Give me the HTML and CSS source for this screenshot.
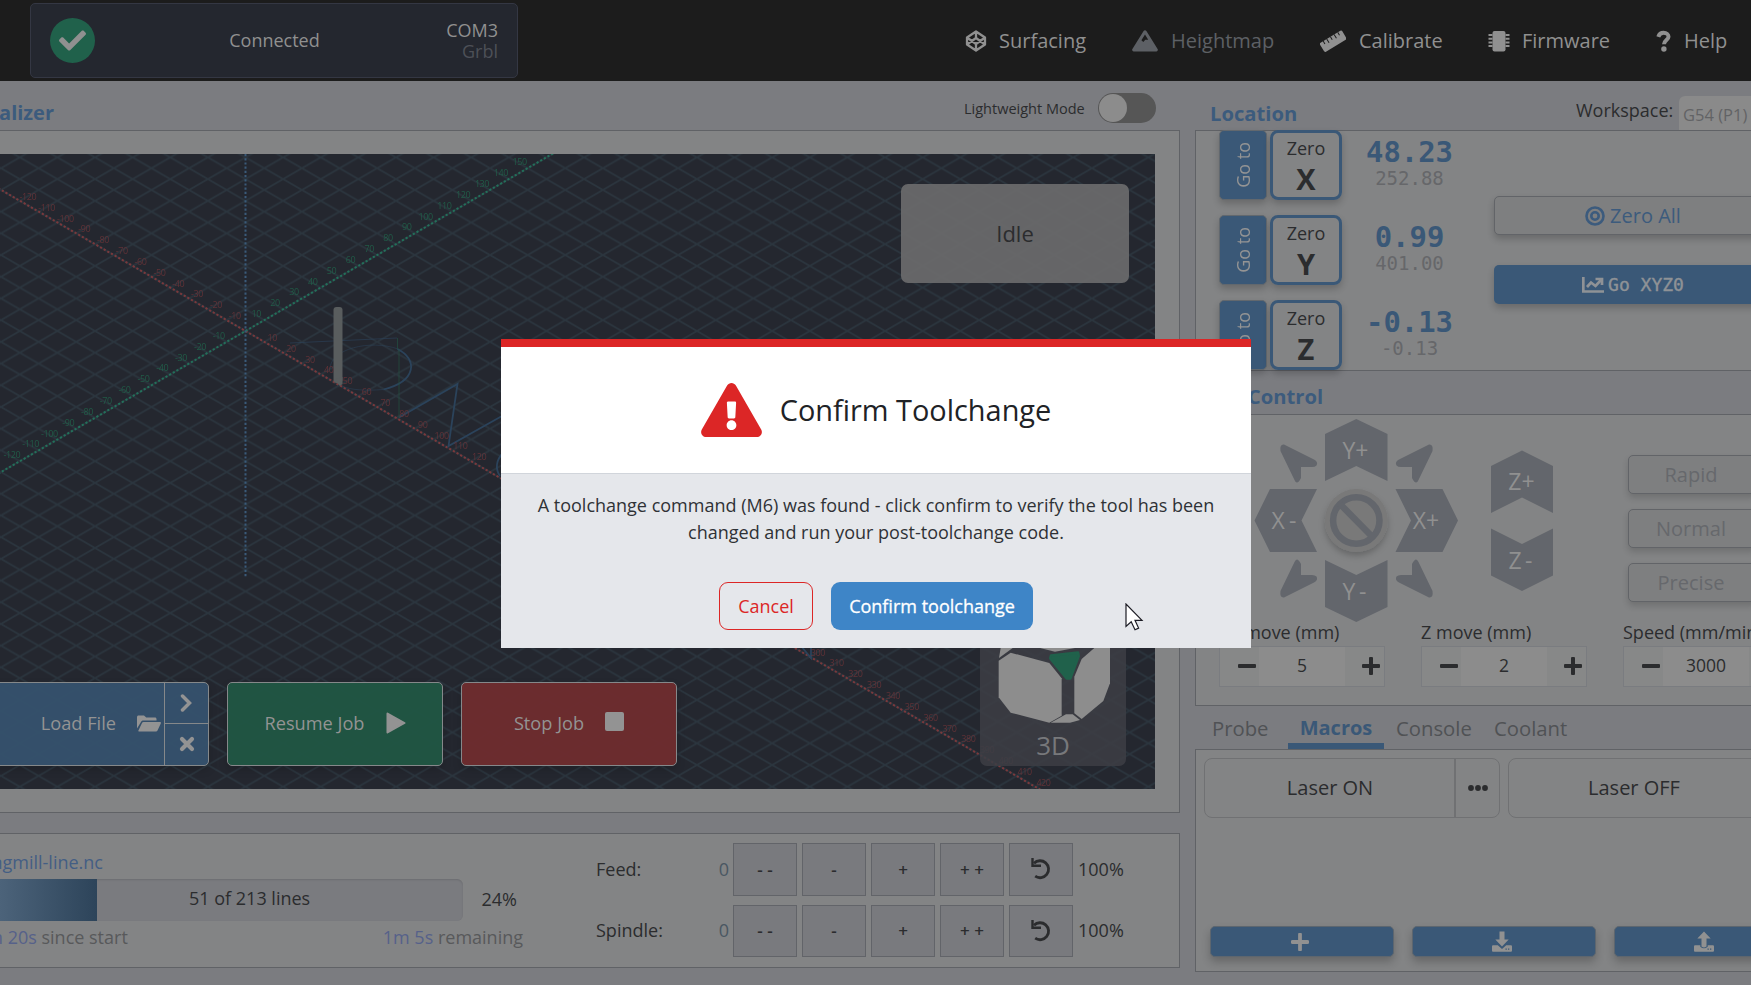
FILE: index.html
```html
<!DOCTYPE html>
<html lang="en">
<head>
<meta charset="utf-8">
<title>gSender</title>
<link rel="stylesheet" href="styles.css">
</head>
<body>
<div class="app">
  <header class="topbar">
    <div class="connection">
      <span class="conn-badge"><svg viewBox="0 0 512 512" width="27" height="27"><path fill="currentColor" d="M173.900 439.400L7.500 273c-10-10-10-26.200 0-36.200l36.200-36.200c10-10 26.200-10 36.200 0L192 312.700 432.100 72.600c10-10 26.200-10 36.200 0l36.200 36.200c10 10 10 26.200 0 36.200L210.100 439.400c-10 10-26.200 10-36.200 0z"/></svg></span>
      <span class="conn-state">Connected</span>
      <span class="conn-port"><span>COM3</span><span class="conn-fw">Grbl</span></span>
    </div>
    <nav class="nav">
      <a class="nav-item surfacing"><svg viewBox="0 0 22 22" width="22" height="22" fill="none" stroke="currentColor" stroke-width="2.300" stroke-linejoin="round"><path d="M11 1.500L20 7.500v7L11 20.500 2 14.500v-7zM11 1.500V8M11 14v6.500M2 7.500L11 14l9-6.500M2 14.500L11 8l9 6.500"/></svg><span>Surfacing</span></a>
      <a class="nav-item heightmap"><svg viewBox="0 0 26 22" width="26" height="22"><path fill="currentColor" fill-rule="evenodd" d="M11.600.9a1.700 1.700 0 0 1 2.800 0l11.200 18a1.700 1.700 0 0 1-1.400 2.600H1.800A1.700 1.700 0 0 1 .4 18.900zM13 4.500l-3.600 5.700 1.900 1.900 2-2.300h2.900z"/></svg><span>Heightmap</span></a>
      <a class="nav-item calibrate"><svg viewBox="0 0 26 22" width="26" height="22"><g transform="rotate(-31 13 11)"><rect x="0" y="6" width="26" height="10.500" rx="1.500" fill="currentColor"/><path d="M4.500 6v3.500M8.700 6v4.500M13 6v3.500M17.300 6v4.500M21.500 6v3.500" stroke="#1c1c1c" stroke-width="1"/></g></svg><span>Calibrate</span></a>
      <a class="nav-item firmware"><svg viewBox="0 0 22 22" width="22" height="22"><rect x="4.500" y="1" width="13" height="20.500" rx="2" fill="currentColor"/><path d="M.5 5h4M.5 8.700h4M.5 12.400h4M.5 16.100h4M17.500 5h4M17.500 8.700h4M17.500 12.400h4M17.500 16.100h4" stroke="currentColor" stroke-width="2"/></svg><span>Firmware</span></a>
      <a class="nav-item help"><svg viewBox="0 0 16 22" width="16" height="22" fill="none" stroke="currentColor"><path stroke-width="4" d="M2.300 6.800C3.200 3.900 5 2.800 7.600 2.800c3 0 4.900 1.700 4.900 3.900 0 3.300-4.500 3.400-4.500 7.600"/><circle cx="7.900" cy="19" r="2.700" fill="currentColor" stroke="none"/></svg><span>Help</span></a>
    </nav>
  </header>

  <main class="main">
    <section class="left">
      <div class="vis-head">
        <h2 class="title vis-title">Visualizer</h2>
        <span class="light-label">Lightweight Mode</span>
        <span class="switch"><i></i></span>
      </div>
      <div class="panel vis-panel">
        <div class="stage">
          <svg class="scene" id="scene" viewBox="0 154 1155 635" width="1155" height="635">
            <defs>
              <pattern id="grid" x="245.500" y="331" width="37.620" height="21.700" patternUnits="userSpaceOnUse">
                <path d="M-1 -.577L38.620 22.277M-1 22.277L38.620 -.577" stroke="#2b353e" stroke-width="1.700"/>
              </pattern>
            </defs>
            <rect y="154" width="1155" height="635" fill="#24272f"/>
            <rect y="154" width="1155" height="635" fill="url(#grid)"/>
            <path class="axis x" d="M-60 154.700L1046 793"/>
            <path class="axis y" d="M-20 484.200L560 149.500"/>
            <path class="axis z" d="M245.500 154V578"/>
            <g fill="none" stroke="#2b435b" stroke-width="1.800">
              <path d="M290 343L397 338" opacity=".6" stroke-width="1"/>
              <path d="M330 369c0-20 40-30 68-20M342 386c8 4 24 5 41 3.500" opacity=".5" stroke-width="1"/>
              <path d="M397.500 349c20 10 20 32-14 40.500"/>
              <path d="M399 417.500L457.500 384 448.500 446 502 416"/>
              <path d="M503 453c-7 7-8 16-3 23"/>
              <path d="M397.500 338v11M399 349v69" stroke="#225040" stroke-width="1" opacity=".7"/>
              <path d="M796 640l15 18V640"/>
            </g>
            <rect x="333.500" y="307" width="9" height="76" rx="3" fill="#595d5e"/>
            <path d="M334 380l6 6 2.500-2v-7z" fill="#595d5e"/>
            <g id="labels"></g>
          </svg>
          <div class="status">Idle</div>
          <div class="viewcube">
            <svg viewBox="0 0 438 354" width="146" height="118">
              <g fill="#8d8d8d">
                <path d="M56 38L92 14 208 45 245 91V203L208 224 92 194 56 148z"/>
                <path d="M283 86L305 33 343 0H390V106L370 159 305 213 283 196z"/>
                <path d="M212 224L258 199H278L300 216 270 224z"/>
                <path d="M180 0L225 11 285 0zM57 30L62 0H98z"/>
              </g>
              <path fill="#20614b" stroke="#20614b" stroke-width="8" stroke-linejoin="round" d="M213 23L294 14 296 24 271 91H260L211 31z"/>
            </svg>
            <span>3D</span>
          </div>
          <div class="jobs">
            <div class="load">
              <div class="load-main"><span>Load File</span><svg viewBox="0 0 24 16" width="24" height="17"><path fill="currentColor" d="M0 1.500C0 .7.700 0 1.500 0H7l2.200 2H18c.8 0 1.500.7 1.500 1.500V5H6.500C5.400 5 4.500 5.500 4 6.400L0 13zM1.200 15.500L5 7.500c.3-.6.8-1 1.500-1H23c.7 0 1.200.7.800 1.400l-3.300 7c-.3.600-.8 1-1.500 1H2c-.5 0-.9-.2-.8-.4z"/></svg></div>
              <div class="load-side">
                <span><svg viewBox="0 0 13 18" width="13" height="18"><path d="M2.500 2L9.500 9l-7 7" fill="none" stroke="currentColor" stroke-width="3.500" stroke-linecap="round"/></svg></span>
                <span><svg viewBox="0 0 16 16" width="16" height="16"><path d="M3 3l10 10M13 3L3 13" fill="none" stroke="currentColor" stroke-width="4.200" stroke-linecap="round"/></svg></span>
              </div>
            </div>
            <div class="job resume"><span>Resume Job</span><svg viewBox="0 0 20 22" width="20" height="22"><path d="M1.500 1.500L18.500 11l-17 9.500z" fill="currentColor" stroke="currentColor" stroke-width="2" stroke-linejoin="round"/></svg></div>
            <div class="job stop"><span>Stop Job</span><svg viewBox="0 0 19 24" width="19" height="24"><rect y="1" width="19" height="19" rx="2" fill="currentColor"/></svg></div>
          </div>
        </div>
      </div>
      <div class="panel status-panel">
        <div class="progress-col">
          <div class="file">longmill-line.nc</div>
          <div class="bar-row"><div class="bar"><div class="fill"></div><span>51 of 213 lines</span></div><span class="pct">24%</span></div>
          <div class="times"><span><b>0m 20s</b> since start</span><span><b>1m 5s</b> remaining</span></div>
        </div>
        <div class="overrides">
          <div class="ov-row feed"><span class="ov-name">Feed:</span><span class="ov-val">0</span><button>- -</button><button>-</button><button>+</button><button>+ +</button><button><svg viewBox="0 0 22 22" width="22" height="22"><path d="M4 5.300A8.500 8.500 0 1 1 5.200 18.200" fill="none" stroke="currentColor" stroke-width="2.800"/><path d="M2.500 0v7.800H11" fill="none" stroke="currentColor" stroke-width="2.400"/></svg></button><span class="ov-pct">100%</span></div>
          <div class="ov-row spindle"><span class="ov-name">Spindle:</span><span class="ov-val">0</span><button>- -</button><button>-</button><button>+</button><button>+ +</button><button><svg viewBox="0 0 22 22" width="22" height="22"><path d="M4 5.300A8.500 8.500 0 1 1 5.200 18.200" fill="none" stroke="currentColor" stroke-width="2.800"/><path d="M2.500 0v7.800H11" fill="none" stroke="currentColor" stroke-width="2.400"/></svg></button><span class="ov-pct">100%</span></div>
        </div>
      </div>
    </section>

    <section class="right">
      <div class="loc-head"><h2 class="title">Location</h2><span class="ws-label">Workspace:</span><span class="ws-select">G54 (P1)</span></div>
      <div class="panel loc-panel">
        <div class="axes">
          <div class="axis-row"><div class="goto"><span>Go to</span></div><div class="zero"><span>Zero</span><b>X</b></div><div class="pos"><b>48.23</b><span>252.88</span></div></div>
          <div class="axis-row"><div class="goto"><span>Go to</span></div><div class="zero"><span>Zero</span><b>Y</b></div><div class="pos"><b>0.99</b><span>401.00</span></div></div>
          <div class="axis-row"><div class="goto"><span>Go to</span></div><div class="zero"><span>Zero</span><b>Z</b></div><div class="pos"><b>-0.13</b><span>-0.13</span></div></div>
        </div>
        <div class="loc-actions">
          <div class="zero-all"><svg viewBox="0 0 20 20" width="20" height="20" fill="none" stroke="currentColor" stroke-width="2.600"><circle cx="10" cy="10" r="8.500"/><circle cx="10" cy="10" r="3.700"/></svg>Zero All</div>
          <div class="go-xyz"><svg viewBox="0 0 22 16" width="22" height="16" fill="none" stroke="currentColor" stroke-width="2.700"><path d="M1.300 0v14.500H22"/><path d="M5 10l4-4.500 4.500 3.500 5.500-6"/><path d="M13.500 2H20v6"/></svg>Go XYZ0</div>
        </div>
      </div>

      <div class="jog-head"><h2 class="title">Jog Control</h2></div>
      <div class="panel jog-panel">
        <div class="jog-top">
          <svg class="jogpad" viewBox="1250 415 310 213" width="310" height="213">
            <defs>
              <path id="corner" d="M1284 444.500L1314 459.500Q1318.500 462 1316.500 465.500Q1315 467 1312 467H1301V478Q1297 486 1294.500 480L1280.500 451Q1279.500 444 1284 444.500z"/>
              <filter id="soft" x="-30%" y="-30%" width="160%" height="170%"><feDropShadow dx="0" dy="4" stdDeviation="3" flood-color="#000" flood-opacity=".22"/></filter>
            </defs>
            <g fill="#63666c">
              <path d="M1325 434L1356.300 419 1387.500 434V481L1356.300 466 1325 481z"/>
              <path d="M1325 560L1356.300 575 1387.500 560V607L1356.300 622 1325 607z"/>
              <path d="M1270 489H1317L1301.500 520.500 1317 552H1270L1254.500 520.500z"/>
              <path d="M1395.500 489H1442.500L1458 520.500 1442.500 552H1395.500L1411 520.500z"/>
              <path d="M1491 466L1522 450.500 1553 466V513L1522 497.500 1491 513z"/>
              <path d="M1491 528.500L1522 544 1553 528.500V575.500L1522 591 1491 575.500z"/>
              <use href="#corner"/>
              <use href="#corner" transform="matrix(-1 0 0 1 2713 0)"/>
              <use href="#corner" transform="matrix(1 0 0 -1 0 1042)"/>
              <use href="#corner" transform="matrix(-1 0 0 -1 2713 1042)"/>
            </g>
            <circle cx="1356.300" cy="520.500" r="31.500" fill="#797979" filter="url(#soft)"/>
            <g fill="none" stroke="#63666c" stroke-width="6.500"><circle cx="1356.300" cy="520.500" r="23.200"/><path d="M1340 504L1372.500 537"/></g>
            <g class="jog-text"><text x="1355.500" y="458.500">Y+</text><text x="1354.500" y="600" textLength="24">Y -</text><text x="1284" y="529" textLength="25">X -</text><text x="1426" y="529">X+</text><text x="1521.500" y="490">Z+</text><text x="1520.500" y="569" textLength="24">Z -</text></g>
          </svg>
          <div class="presets"><div>Rapid</div><div>Normal</div><div>Precise</div></div>
        </div>
        <div class="steps">
          <div class="step"><label>XY move (mm)</label><div class="spin"><i class="minus"></i><span>5</span><i class="plus"></i></div></div>
          <div class="step"><label>Z move (mm)</label><div class="spin"><i class="minus"></i><span>2</span><i class="plus"></i></div></div>
          <div class="step"><label>Speed (mm/min)</label><div class="spin"><i class="minus"></i><span>3000</span><i class="plus"></i></div></div>
        </div>
      </div>

      <div class="tabs"><span class="tab probe">Probe</span><span class="tab active">Macros</span><span class="tab console">Console</span><span class="tab coolant">Coolant</span></div>
      <div class="panel macro-panel">
        <div class="macros">
          <div class="macro"><span>Laser ON</span><em><svg viewBox="0 0 20 6" width="20" height="6" fill="currentColor"><circle cx="3" cy="3" r="2.900"/><circle cx="10" cy="3" r="2.900"/><circle cx="17" cy="3" r="2.900"/></svg></em></div>
          <div class="macro"><span>Laser OFF</span><em></em></div>
        </div>
        <div class="macro-actions">
          <div><svg viewBox="0 0 18 18" width="18" height="18"><path d="M9 1.500v15M1.500 9h15" stroke="currentColor" stroke-width="3.800" stroke-linecap="round"/></svg></div>
          <div><svg viewBox="0 0 20 21" width="20" height="21"><path fill="currentColor" d="M7.500.500h5v8h4.200L10 15.500 3.300 8.500h4.200zM0 15.500c0-.8.500-1.300 1.300-1.300h4.500L10 18l4.200-3.800h4.500c.8 0 1.300.5 1.300 1.300v4c0 .8-.5 1.300-1.300 1.300H1.300C.5 20.800 0 20.300 0 19.500z"/><path d="M13.500 18.200h1.300M16 18.200h1.300" stroke="#3a5877" stroke-width="1.200"/></svg></div>
          <div><svg viewBox="0 0 20 21" width="20" height="21"><path fill="currentColor" d="M7.500 15.500v-8H3.300L10 .5l6.700 7h-4.200v8q-2.500 2-5 0zM0 15.500c0-.8.500-1.300 1.300-1.300h5v1.500q3.700 3 7.400 0v-1.500h5c.8 0 1.300.5 1.300 1.300v4c0 .8-.5 1.300-1.300 1.300H1.300C.5 20.800 0 20.300 0 19.500z"/><path d="M13.500 18.200h1.300M16 18.200h1.300" stroke="#3a5877" stroke-width="1.200"/></svg></div>
        </div>
      </div>
    </section>
  </main>

  <div class="modal">
    <div class="modal-head"><svg viewBox="0 0 576 512" width="61" height="54"><path fill="#dc2626" d="M569.500 440c18.500 32-4.700 72-41.600 72H48.100c-36.900 0-60-40.100-41.600-72L246.400 24c18.500-32 64.700-32 83.200 0l239.900 416zM288 354c-25.400 0-46 20.600-46 46s20.600 46 46 46 46-20.600 46-46-20.600-46-46-46zm-43.700-165.300l7.400 136c.3 6.400 5.600 11.300 12 11.300h48.500c6.400 0 11.600-5 12-11.300l7.400-136c.4-6.900-5.100-12.700-12-12.700h-63.400c-6.900 0-12.300 5.800-12 12.700z"/></svg><h1>Confirm Toolchange</h1></div>
    <div class="modal-body">
      <p>A toolchange command (M6) was found - click confirm to verify the tool has been changed and run your post-toolchange code.</p>
      <div class="modal-actions"><button class="cancel">Cancel</button><button class="confirm">Confirm toolchange</button></div>
    </div>
  </div>
  <svg class="cursor" viewBox="0 0 19 28" width="19" height="28"><path d="M1 1v22.500l5.200-4.800 3.800 8 3.600-1.600-3.600-7.800h7z" fill="#fff" stroke="#1c1c24" stroke-width="1.200"/></svg>
</div>
<script src="labels.js"></script>
</body>
</html>
```
FILE: labels.js
```js
// Tick labels along the X and Y axes of the scene.
const group = document.getElementById("labels");
const origin = { x: 245.5, y: 331 };
const step = { x: 18.81, y: 10.85 };

function addLabel(x, y, value, axis) {
  const t = document.createElementNS("http://www.w3.org/2000/svg", "text");
  t.setAttribute("x", x.toFixed(1));
  t.setAttribute("y", y.toFixed(1));
  t.setAttribute("class", "tick " + axis);
  t.textContent = value;
  group.appendChild(t);
}

for (let k = -12; k <= 42; k++) {
  // Ticks 13 to 29 lie behind the dialog.
  if (k === 0 || (k > 12 && k < 30)) continue;
  addLabel(origin.x + k * step.x + 8, origin.y + k * step.y - 1, k * 10, "x");
}
for (let k = -12; k <= 15; k++) {
  if (k === 0) continue;
  addLabel(origin.x + k * step.x - 8, origin.y - k * step.y - 3, k * 10, "y");
}
```
FILE: styles.css
```css
* { box-sizing: border-box; }
body { margin: 0; background: #7b7c80; font-family: "Open Sans", "Noto Sans", sans-serif; color: #2b2c2e; }
h1, h2, p { margin: 0; font-weight: 400; }
button { font: inherit; color: inherit; padding: 0; }
svg { display: block; flex: none; }
.app { position: relative; width: 1751px; height: 985px; overflow: hidden; }

.topbar { display: flex; height: 81px; background: #1c1c1c; padding: 3px 0 0 30px; color: #909090; }
.connection { width: 488px; height: 75px; border: 1px solid #343743; border-radius: 5px; background: #24272f; display: grid; grid-template-columns: 45px 1fr 60px; align-items: center; padding: 0 19px; font-size: 18px; }
.conn-badge { width: 45px; height: 45px; border-radius: 50%; background: #20614b; display: grid; place-items: center; }
.conn-state { text-align: center; padding: 0 0 2px 16px; }
.conn-port { display: flex; flex-direction: column; align-items: flex-end; line-height: 21px; }
.conn-fw { color: #4d5057; }
.nav { display: flex; margin-left: 447px; height: 75px; align-items: center; font-size: 20px; }
.nav-item { display: flex; align-items: center; flex: none; }
.nav-item svg { margin-right: 12px; }
.surfacing { width: 167px; }
.heightmap { width: 188px; color: #5d6065; }
.heightmap svg, .calibrate svg { margin-right: 13px; }
.calibrate { width: 168px; }
.firmware { width: 168px; }

.main { display: flex; align-items: flex-start; }
.left { width: 1180px; flex: none; }
.right { width: 600px; margin-left: 15px; flex: none; }
.panel { background: #838485; border: 1px solid #606266; }
.title { font-size: 20px; font-weight: 700; color: #3c5b7d; line-height: 26px; }

.vis-head { height: 49px; display: flex; align-items: flex-start; padding-top: 12px; }
.vis-title { width: 100px; margin: 7px 864px 0 -46px; text-align: right; }
.vis-head .vis-title { flex: none; }
.light-label { font-size: 14.500px; line-height: 20px; margin: 6px 0 0 46px; width: 134px; white-space: nowrap; flex: none; }
.switch { width: 58px; height: 30px; border-radius: 15px; background: #565656; padding: 1px; flex: none; }
.switch i { display: block; width: 28px; height: 28px; border-radius: 50%; background: #8c8c8c; }

.vis-panel { height: 683px; border-left: 0; padding: 23px 24px 0 0; }
.stage { position: relative; width: 1155px; height: 635px; overflow: hidden; }
.axis { fill: none; stroke-width: 2; stroke-dasharray: 2.200 2; }
.axis.x { stroke: #7a393c; }
.axis.y { stroke: #23705a; }
.axis.z { stroke: #3a5a79; }
.tick { font-size: 9px; text-anchor: middle; letter-spacing: -.4px; opacity: .8; }
.tick.x { fill: #6f3438; }
.tick.y { fill: #20684d; }
.status { position: absolute; left: 901px; top: 30px; width: 228px; height: 99px; border-radius: 7px; background: rgba(106, 107, 108, .93); display: grid; place-items: center; font-size: 22px; padding-bottom: 2px; }
.viewcube { position: absolute; left: 980px; top: 494px; width: 146px; height: 118px; border-radius: 0 0 7px 7px; background: rgba(60, 62, 68, .88); }
.viewcube span { position: absolute; left: 0; right: 0; bottom: 4.500px; text-align: center; font-size: 26px; line-height: 34px; color: #77787b; }
.jobs { position: absolute; left: -8px; top: 528px; display: flex; gap: 18px; color: #939393; font-size: 18.200px; }
.load, .job { height: 84px; border: 1px solid #85888a; border-radius: 5px; box-shadow: 0 4px 8px rgba(0, 0, 0, .15); }
.load { width: 217px; display: flex; background: rgba(53, 81, 108, .96); }
.load-main { width: 172px; border-right: 1px solid #85888a; display: flex; align-items: center; justify-content: flex-end; padding: 0 3px 2px 0; gap: 21px; }
.load-side { flex: 1; display: grid; grid-template-rows: 40px 42px; }
.load-side span { display: grid; place-items: center; padding-bottom: 1px; }
.load-side span + span { border-top: 1px solid #85888a; }
.job { width: 216px; display: flex; align-items: center; justify-content: center; gap: 21px; padding-bottom: 2px; }
.resume { background: rgba(32, 86, 67, .97); }
.stop { background: rgba(109, 44, 46, .97); }

.status-panel { height: 135px; margin-top: 20px; border-left: 0; display: flex; }
.progress-col { width: 523px; padding-top: 16px; font-size: 18px; flex: none; }
.file { width: 103px; direction: rtl; white-space: nowrap; line-height: 24px; color: #435e84; margin-bottom: 5px; }
.bar-row { display: flex; align-items: center; }
.bar { width: 463px; height: 42px; border-radius: 0 6px 6px 0; background: #7a7b7f; display: flex; align-items: center; box-shadow: inset 0 1px 2px rgba(0, 0, 0, .12); flex: none; }
.fill { width: 97px; height: 42px; background: linear-gradient(90deg, #4c637a, #2d445a); margin-right: 92px; }
.bar > span { line-height: 20px; padding-bottom: 4px; }
.pct { margin-left: 18.500px; padding-bottom: 2px; }
.times { display: flex; justify-content: space-between; line-height: 24px; margin: 4px 0 0 -24px; color: #58595b; white-space: nowrap; }
.times b { font-weight: 400; color: #56618a; }
.overrides { padding: 9px 0 0 73px; font-size: 18px; }
.ov-row { display: flex; height: 53px; margin-bottom: 9px; align-items: center; }
.ov-row.spindle { height: 52px; }
.ov-row > span { padding-bottom: 2px; }
.ov-name { width: 104px; }
.ov-val { width: 29px; text-align: right; color: #4a5762; }
.ov-row button { width: 64px; height: 100%; background: #797a7e; border: 1px solid #626469; margin-left: 5px; display: grid; place-items: center; font-weight: 600; font-size: 17px; padding: 0 0 1px 0; }
.ov-row .ov-val + button { margin-left: 4px; }
.ov-pct { margin-left: 5px; }

.loc-head { height: 49px; display: flex; }
.loc-head .title { padding: 19px 0 0 15px; width: 381px; font-size: 20.200px; }
.ws-label { font-size: 18px; line-height: 24px; padding-top: 17px; width: 103px; }
.ws-select { margin-top: 15px; height: 34px; width: 110px; background: #8a8a8a; border-radius: 6px 0 0 0; font-size: 16.500px; line-height: 37px; padding-left: 4px; color: #626365; }
.loc-panel { height: 241px; display: flex; padding-left: 23px; }
.axes { display: grid; gap: 15px; align-content: start; width: 275px; margin-top: -1px; }
.axis-row { display: flex; height: 70px; }
.goto { width: 48px; background: #3a5877; border: 1px solid #62686e; border-radius: 5px; color: #949494; display: grid; place-items: center; font-size: 18px; box-shadow: 0 4px 7px rgba(0, 0, 0, .2); }
.goto span { writing-mode: vertical-rl; transform: rotate(180deg); }
.zero { width: 72px; margin-left: 3px; border: 3px solid #3a5877; border-radius: 8px; text-align: center; display: flex; flex-direction: column; align-items: center; box-shadow: 0 4px 7px rgba(0, 0, 0, .2); font-size: 18px; line-height: 22px; padding-top: 4px; }
.zero b { font-size: 29px; line-height: 40px; }
.pos { width: 135px; font-family: "DejaVu Sans Mono", monospace; text-align: center; display: flex; flex-direction: column; }
.pos b { font-size: 28.900px; line-height: 30px; color: #3a5877; margin-top: 7px; }
.pos span { font-size: 19px; line-height: 22px; color: #66676a; }
.loc-actions { padding-top: 65px; }
.loc-actions > div { width: 280px; height: 39px; border-radius: 5px; display: flex; align-items: center; justify-content: center; box-shadow: 0 4px 7px rgba(0, 0, 0, .2); gap: 5px; padding-right: 2px; }
.zero-all { border: 1px solid #626468; background: #7e7f80; color: #3c5b7d; font-size: 20px; margin-bottom: 30px; }
.loc-actions > .go-xyz { background: #3a5877; color: #8f9296; font: 18px "DejaVu Sans Mono", monospace; -webkit-text-stroke: .4px; gap: 4px; }

.jog-head { height: 43px; padding: 12px 0 0 17px; }
.jog-head .title { font-size: 20.200px; }
.jog-panel { height: 292px; }
.jog-top { display: flex; padding-left: 54px; height: 209px; }
.jogpad { overflow: visible; }
.jog-text { font-size: 23px; fill: #909090; text-anchor: middle; }
.presets { display: grid; gap: 15px; align-content: start; padding: 40px 0 0 68px; }
.presets div { width: 128px; height: 39px; border: 1px solid #626468; border-radius: 5px; background: #7e7f80; color: #66686c; font-size: 20px; line-height: 37px; text-align: center; padding-right: 2px; box-shadow: 0 4px 6px rgba(0, 0, 0, .15); }
.steps { display: flex; gap: 36px; padding-left: 23px; margin-top: -5px; }
.step { width: 166px; flex: none; white-space: nowrap; }
.step label { display: block; font-size: 18px; line-height: 26px; height: 27px; }
.spin { height: 41px; display: grid; grid-template-columns: 39px 86px 39px; border: 1px solid #7a7c80; background: #878888; align-items: stretch; text-align: center; font-size: 17.500px; line-height: 37px; }
.spin span { background: #8c8c8c; }
.spin i { position: relative; }
.spin i::before, .spin .plus::after { content: ""; position: absolute; background: #2b2c2e; border-radius: 1px; left: 18px; top: 17px; width: 18px; height: 4px; }
.spin .plus::before { left: 17px; }
.spin .plus::after { left: 24px; top: 10px; width: 4px; height: 18px; }

.tabs { height: 43px; display: flex; font-size: 20.300px; line-height: 44px; color: #505255; }
.tab.probe { padding-left: 17px; width: 93px; }
.tab.active { width: 96px; text-align: center; font-weight: 700; color: #3a5877; border-bottom: 6px solid #3a5877; font-size: 20px; }
.tab.console { padding-left: 12px; width: 110px; }
.macro-panel { height: 223px; padding: 8px 0 0 8px; }
.macros { display: flex; gap: 8px; }
.macro { width: 296px; height: 60px; border: 1px solid #707173; border-radius: 8px; display: grid; grid-template-columns: 249px 45px; text-align: center; font-size: 20px; line-height: 57px; flex: none; }
.macro span { padding-left: 1px; }
.macro em { border-left: 2px solid #707173; display: grid; place-items: center; }
.macro-actions { display: flex; gap: 18px; margin: 108px 0 0 6px; color: #919191; }
.macro-actions div { width: 184px; height: 31px; flex: none; border: 1px solid #5d666f; border-radius: 5px; background: #3a5877; display: grid; place-items: center; padding-right: 4px; box-shadow: 0 5px 8px rgba(0, 0, 0, .22); }

.modal { position: absolute; left: 501px; top: 339px; width: 750px; height: 309px; border-top: 8px solid #dc2626; background: #e5e7eb; }
.modal-head { height: 127px; background: #fff; border-bottom: 1px solid #d1d5db; display: flex; align-items: center; justify-content: center; gap: 18px; color: #202226; }
.modal-head h1 { font-size: 28.900px; line-height: 36px; padding-bottom: 1px; }
.modal-body { padding: 18px 30px; text-align: center; font-size: 18px; line-height: 27px; color: #2f3236; }
.modal-actions { display: flex; justify-content: center; gap: 18px; margin-top: 36px; }
.modal-actions button { height: 48px; border-radius: 9px; }
.cancel { width: 94px; border: 1px solid #dc2626; background: transparent; color: #dc2626; }
.confirm { width: 202px; border: 0; background: #3e85c7; color: #fff; -webkit-text-stroke: .3px; }
.cursor { position: absolute; left: 1125px; top: 603px; }
```
